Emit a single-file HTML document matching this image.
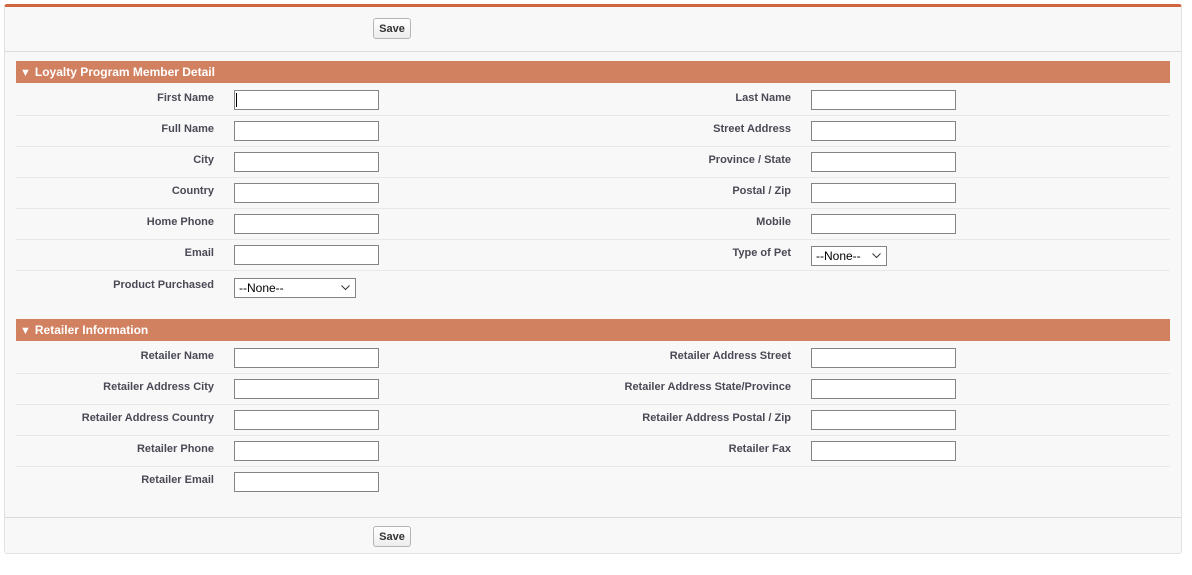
<!DOCTYPE html>
<html><head><style>
body{margin:0;background:#fff;font-family:"Liberation Sans",Arial,sans-serif;}
.box{position:absolute;left:4px;top:4px;width:1178px;height:550px;background:#f8f8f8;border:1px solid #e0e3e5;border-top:3px solid #d0663f;border-radius:3px;box-sizing:border-box;}
.abs{position:absolute;}
.btn{position:absolute;width:38px;height:21px;border:1px solid #b5b5b5;border-radius:3px;background:linear-gradient(#fff,#ededed);font-size:11px;font-weight:bold;color:#333;text-align:center;line-height:20px;box-sizing:border-box;}
.hline{position:absolute;height:1px;background:#dbdbdb;}
.hdr{position:absolute;left:16px;width:1154px;height:22px;background:#d28160;color:#fff;font-weight:bold;font-size:12px;line-height:22px;}
.hdr span{font-size:11px;margin:0 4px 0 4px;}
.lbl{position:absolute;font-size:11px;font-weight:bold;color:#4a4a56;text-align:right;}
.in{position:absolute;width:145px;height:20px;border:1px solid #848484;background:#fff;box-sizing:border-box;}
.sep{position:absolute;left:16px;width:1154px;height:1px;background:#e8e8e8;}
.sel{position:absolute;height:20px;border:1px solid #848484;background:#fff;box-sizing:border-box;font-size:12px;color:#000;line-height:18px;padding-left:4px;font-family:"Liberation Sans",Arial,sans-serif;}
.sel svg{position:absolute;right:5px;top:6px;}
</style></head><body>
<div class="box"></div>
<div class="btn" style="left:373px;top:18px">Save</div>
<div class="hline" style="left:5px;top:51px;width:1176px"></div>
<div class="hdr" style="top:61px"><span>▼</span>Loyalty Program Member Detail</div>
<div class="hdr" style="top:319px"><span>▼</span>Retailer Information</div>
<div class="hline" style="left:5px;top:517px;width:1176px"></div>
<div class="btn" style="left:373px;top:526px">Save</div>
<div id="f"></div>
<script>
var f=document.getElementById('f'),h='';
function row(y,l,r,sepAfter){
 h+='<div class="lbl" style="right:978px;top:'+(y+2)+'px">'+l+'</div>';
 if(l!=='Product Purchased')h+='<div class="in" style="left:234px;top:'+y+'px"></div>';
 if(r){h+='<div class="lbl" style="right:401px;top:'+(y+2)+'px">'+r+'</div>';
 if(r!=='Type of Pet')h+='<div class="in" style="left:811px;top:'+y+'px"></div>';}
 if(sepAfter)h+='<div class="sep" style="top:'+(y+25)+'px"></div>';
}
var a=[['First Name','Last Name'],['Full Name','Street Address'],['City','Province / State'],['Country','Postal / Zip'],['Home Phone','Mobile'],['Email','Type of Pet']];
a.forEach(function(p,i){row(90+31*i,p[0],p[1],true);});
h+='<div class="lbl" style="right:978px;top:279px">Product Purchased</div>';
var chev='<svg width="9" height="6" viewBox="0 0 9 6"><path d="M0.5 0.5L4.5 4.5L8.5 0.5" fill="none" stroke="#333" stroke-width="1"/></svg>';
h+='<div class="sel" style="left:234px;top:278px;width:122px">--None--'+chev+'</div>';
h+='<div class="sel" style="left:811px;top:246px;width:76px">--None--'+chev+'</div>';
h+='<div class="abs" style="left:236px;top:93px;width:1px;height:14px;background:#000"></div>';
var b=[['Retailer Name','Retailer Address Street'],['Retailer Address City','Retailer Address State/Province'],['Retailer Address Country','Retailer Address Postal / Zip'],['Retailer Phone','Retailer Fax'],['Retailer Email','']];
b.forEach(function(p,i){row(348+31*i,p[0],p[1],i<4);});
f.innerHTML=h;
</script>
</body></html>
